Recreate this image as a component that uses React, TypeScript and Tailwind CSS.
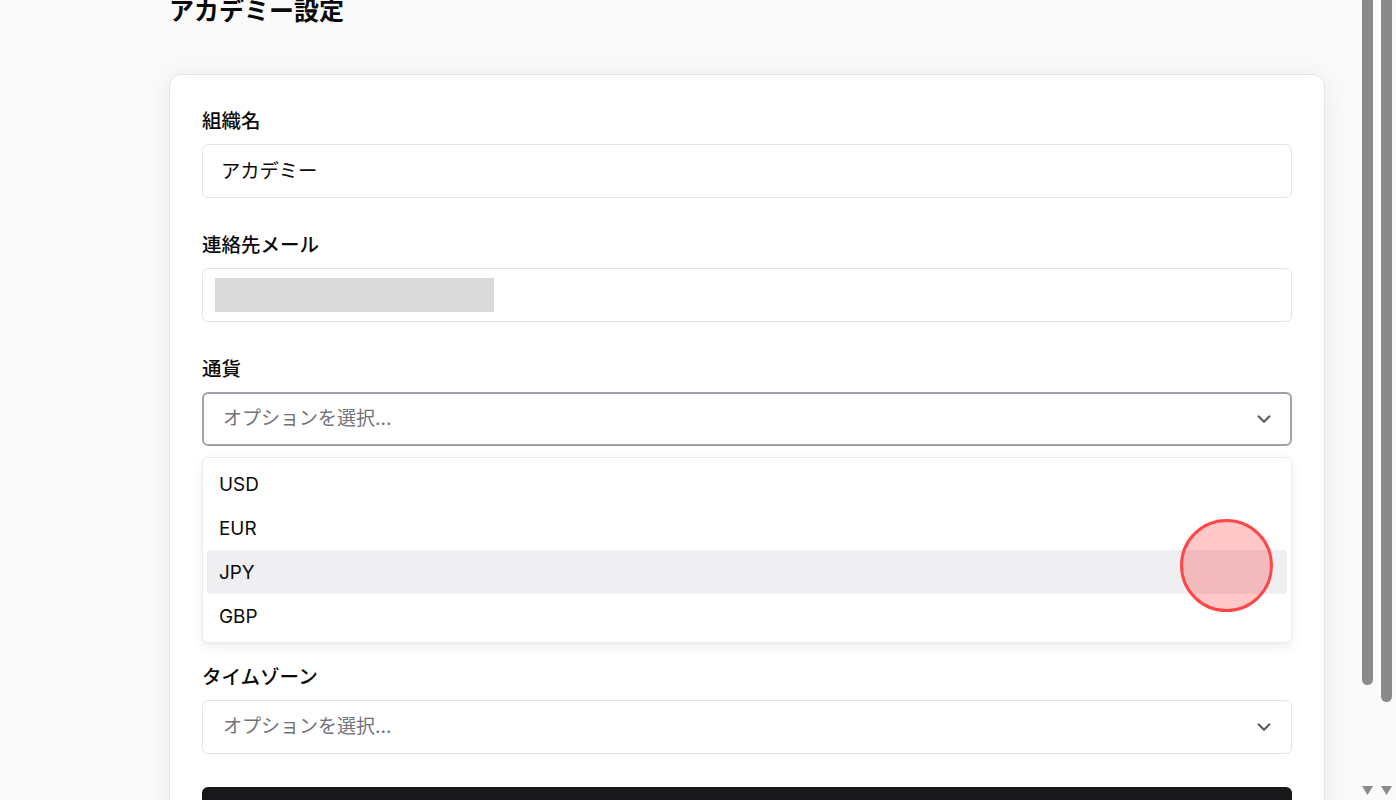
import { ChevronDown } from 'lucide-react';

const currencies = ['USD', 'EUR', 'JPY', 'GBP'];

function Label({ children }: { children: React.ReactNode }) {
  return <div className="mb-[10px] pt-[1px] h-[27px] text-[19.5px] leading-[26px] font-medium text-[#0a0a0a]">{children}</div>;
}

function SelectBox({ focused = false }: { focused?: boolean }) {
  return (
    <div
      className={
        focused
          ? 'h-[54px] rounded-md border-2 border-[#a1a1aa] bg-white pl-[19px] pr-[15px] flex items-center justify-between'
          : 'h-[54px] rounded-md border border-[#e5e5e5] bg-white pl-5 pr-4 flex items-center justify-between'
      }
    >
      <span className="pt-[1px] text-[19px] text-[#71717a]">オプションを選択...</span>
      <ChevronDown size={22} strokeWidth={2} className="text-[#52525b]" />
    </div>
  );
}

function Scrollbar({ thumb }: { thumb: string }) {
  return (
    <div className="w-[11px] h-full flex flex-col">
      <div className={`${thumb} w-full rounded-b-full bg-[#8a8a8a]`} />
      <svg className="mt-auto mb-[5px]" width="11" height="9" viewBox="0 0 11 9">
        <polygon points="0,0 11,0 5.5,9" fill="#8a8a8a" />
      </svg>
    </div>
  );
}

export default function App() {
  return (
    <div className="relative h-[800px] overflow-hidden bg-[#fafafa] flex font-['Inter','Noto_Sans_CJK_JP',sans-serif]">
      <main className="w-[1358px] pl-[169px]">
        <h1 className="-mt-[5px] text-[25px] leading-[32px] font-bold text-[#0a0a0a]">アカデミー設定</h1>

        <div className="mt-[47px] w-[1156px] rounded-xl border border-[#e5e5e5] bg-white px-8 pt-8 pb-8 shadow-[0_2px_28px_rgba(0,0,0,0.07)]">
          <Label>組織名</Label>
          <div className="h-[54px] rounded-md border border-[#e5e5e5] px-[18px] pt-[1px] flex items-center text-[19.3px] text-[#0a0a0a]">
            アカデミー
          </div>

          <div className="mt-[33px]">
            <Label>連絡先メール</Label>
            <div className="h-[54px] rounded-md border border-[#e5e5e5] pl-3 flex items-center">
              <div className="w-[279px] h-[34px] bg-[#dadada]" />
            </div>
          </div>

          <div className="mt-[33px]">
            <Label>通貨</Label>
            <SelectBox focused />
            <div className="mt-[11px] rounded-md border border-[#ebebeb] bg-white p-1 shadow-[0_4px_12px_rgba(0,0,0,0.08)]">
              {currencies.map((c) => (
                <div
                  key={c}
                  className={`h-11 rounded-sm px-3 pt-[2px] flex items-center text-[18.9px] text-[#0a0a0a] ${c === 'JPY' ? 'bg-[#efeff1]' : ''}`}
                >
                  {c}
                </div>
              ))}
            </div>
          </div>

          <div className="mt-5">
            <Label>タイムゾーン</Label>
            <SelectBox />
          </div>

          <button className="mt-[33px] h-[54px] w-full rounded-md bg-[#18181b] text-[18.9px] font-medium text-white">
            保存
          </button>
        </div>
      </main>

      <div className="flex-1 h-full pl-1 flex gap-2">
        <Scrollbar thumb="h-[685px]" />
        <Scrollbar thumb="h-[702px]" />
      </div>

      {/* pointer highlight */}
      <div className="absolute left-[1180px] top-[519px] w-[93px] h-[93px] rounded-full border-[3px] border-[#ff4747] bg-[rgba(255,0,0,0.22)]" />
    </div>
  );
}
